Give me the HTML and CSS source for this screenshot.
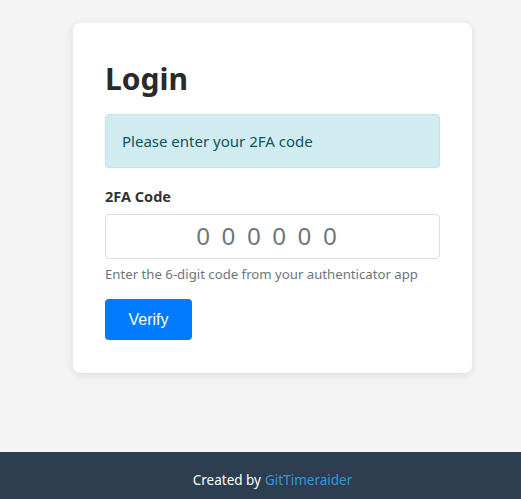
FILE: index.html
```html
<!DOCTYPE html>
<html lang="en">
<head>
<meta charset="utf-8">
<title>Login</title>
<link rel="stylesheet" href="styles.css">
</head>
<body>
<main class="main">
  <div class="card">
    <h1 class="title">Login</h1>
    <div class="alert">Please enter your 2FA code</div>
    <form class="form">
      <label class="label" for="code">2FA Code</label>
      <input class="input" id="code" type="text" placeholder="000000" maxlength="6">
      <div class="help">Enter the 6-digit code from your authenticator app</div>
      <button class="btn" type="button">Verify</button>
    </form>
  </div>
</main>
<footer class="footer">Created by <a class="link" href="#">GitTimeraider</a></footer>
</body>
</html>
```
FILE: styles.css
```css
html, body { margin: 0; padding: 0; }
body {
  background: #f4f4f4;
  font-family: "Noto Sans", "Open Sans", sans-serif;
  color: #333;
  min-height: 100vh;
  display: flex;
  flex-direction: column;
}
.main {
  flex: 1;
  display: flex;
  justify-content: center;
  align-items: flex-start;
  padding: 23px 0 0 24px;
}
.card {
  width: 399px;
  box-sizing: border-box;
  background: #fff;
  border-radius: 8px;
  box-shadow: 0 2px 10px rgba(0,0,0,0.1);
  padding: 32px 32px 33px 32px;
}
.title {
  margin: 4px 0 15px;
  font-size: 30px;
  line-height: 40px;
  font-weight: 700;
  color: #2a2a2a;
}
.alert {
  background: #d1ecf1;
  border: 1px solid #bee5eb;
  color: #0c5460;
  border-radius: 4px;
  padding: 16px 16px;
  font-size: 15px;
  line-height: 20px;
  margin-bottom: 18px;
}
.form { display: flex; flex-direction: column; align-items: flex-start; }
.label {
  font-weight: 700;
  font-size: 14.5px;
  line-height: 20px;
  margin-bottom: 8px;
  color: #333;
}
.input {
  width: 100%;
  box-sizing: border-box;
  height: 45px;
  border: 1px solid #ddd;
  border-radius: 4px;
  text-align: center;
  font-family: "Liberation Sans", Arial, sans-serif;
  font-size: 24px;
  letter-spacing: 12px;
  padding: 0;
}
.input::placeholder { color: #6c757d; }
.help {
  font-size: 13.2px;
  line-height: 18px;
  color: #6c757d;
  margin-top: 6px;
}
.btn {
  margin-top: 16px;
  width: 87px;
  height: 41px;
  border: none;
  border-radius: 4px;
  background: #007bff;
  color: #fff;
  font-family: "Liberation Sans", Arial, sans-serif;
  font-size: 16px;
}
.footer {
  height: 47px;
  background: #2c3e50;
  color: #fff;
  font-size: 13.5px;
  display: flex;
  align-items: center;
  justify-content: center;
  padding: 9px 0 0 24px;
  box-sizing: border-box;
}
.link { color: #3498db; text-decoration: none; margin-left: 4px; }
```
